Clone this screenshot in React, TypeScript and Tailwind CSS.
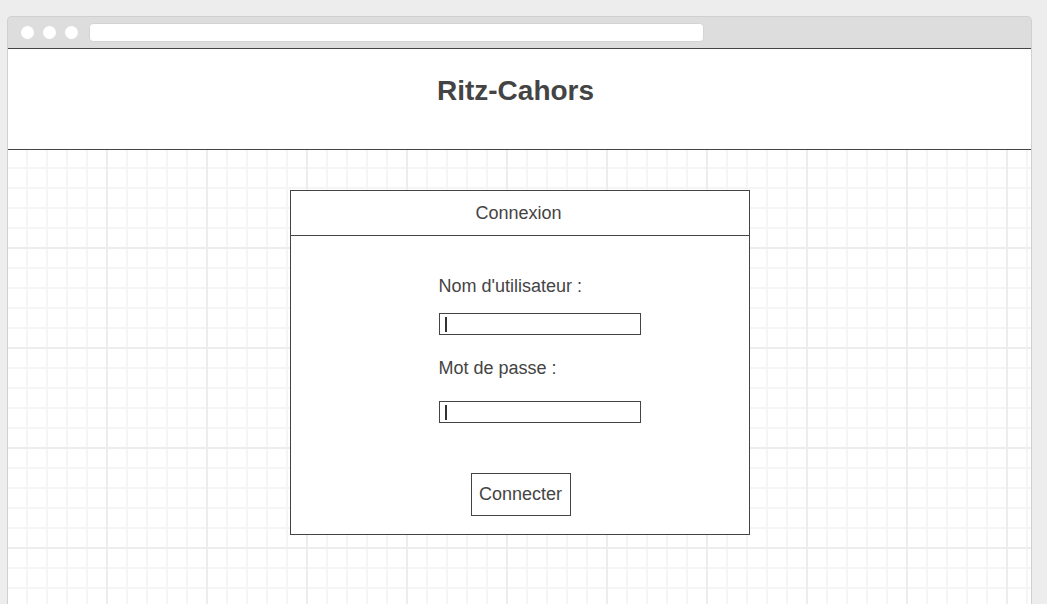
export default function App() {
  return (
    <div className="min-h-[604px] bg-[#ededed] pt-[16px] pl-[7px] pr-[15px] font-['Liberation_Sans',Arial,sans-serif] text-[#444]">
      <div className="flex h-[588px] flex-col overflow-hidden rounded-t-[5px] border-x border-t border-[#d0d0d0] bg-[#dddddd]">
        {/* toolbar */}
        <div className="flex h-[31px] shrink-0 items-center pl-[13px]">
          <div className="flex gap-[9px]">
            <span className="h-[13px] w-[13px] rounded-full bg-white" />
            <span className="h-[13px] w-[13px] rounded-full bg-white" />
            <span className="h-[13px] w-[13px] rounded-full bg-white" />
          </div>
          <div className="ml-[11px] h-[19px] w-[615px] rounded-[4px] border border-[#d4d4d4] bg-white" />
        </div>

        {/* site header */}
        <div className="-mx-px flex h-[102px] shrink-0 items-center justify-center border border-[#444] bg-white pr-[8px] pb-[16px]">
          <h1 className="text-[28px] font-bold">Ritz-Cahors</h1>
        </div>

        {/* grid canvas */}
        <div className="flex-1 bg-white bg-[image:linear-gradient(to_right,#ededed_2px,transparent_2px),linear-gradient(to_bottom,#ededed_2px,transparent_2px),linear-gradient(to_right,#f5f5f5_2px,transparent_2px),linear-gradient(to_bottom,#f5f5f5_2px,transparent_2px)] bg-[size:100px_100px,100px_100px,20px_20px,20px_20px] bg-[position:98px_97px,98px_97px,18px_17px,18px_17px] pt-[40px]">
          <div className="mx-auto w-[460px] border border-[#444] bg-white">
            <div className="flex h-[45px] items-center justify-center border-b border-[#444] pr-[2px] text-[18px]">
              Connexion
            </div>
            <div className="pl-[148px] pt-[40px]">
              <label className="block text-[18px] leading-5">Nom d'utilisateur :</label>
              <div className="mt-[17px] flex h-[22px] w-[202px] items-center border border-[#444] pl-[5px]">
                <span className="h-[15px] w-[2px] bg-[#333]" />
              </div>
              <label className="mt-[23px] block text-[18px] leading-5">Mot de passe :</label>
              <div className="mt-[23px] flex h-[22px] w-[202px] items-center border border-[#444] pl-[5px]">
                <span className="h-[15px] w-[2px] bg-[#333]" />
              </div>
            </div>
            <div className="flex justify-center pt-[50px] pb-[18px] pl-[2px]">
              <button className="h-[43px] w-[100px] border border-[#444] bg-white text-[18px] text-[#444]">
                Connecter
              </button>
            </div>
          </div>
        </div>
      </div>
    </div>
  );
}
